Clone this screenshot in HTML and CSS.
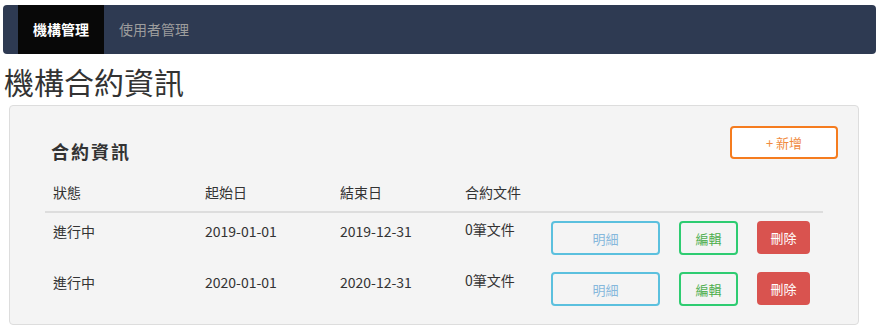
FILE: index.html
```html
<!DOCTYPE html>
<html>
<head>
  <title>機構合約資訊</title>
  <link rel="stylesheet" href="styles.css">
</head>
<body>
  <nav class="navbar">
    <a class="nav-item active" href="#">機構管理</a>
    <a class="nav-item" href="#">使用者管理</a>
  </nav>

  <h1 class="page-title">機構合約資訊</h1>

  <div class="panel">
    <div class="panel-head">
      <h3>合約資訊</h3>
      <button class="btn btn-add">+ 新增</button>
    </div>

    <table class="contract-table">
      <colgroup>
        <col class="col-status">
        <col class="col-start">
        <col class="col-end">
        <col class="col-docs">
        <col>
      </colgroup>
      <thead>
        <tr>
          <th>狀態</th>
          <th>起始日</th>
          <th>結束日</th>
          <th>合約文件</th>
          <th></th>
        </tr>
      </thead>
      <tbody>
        <tr>
          <td>進行中</td>
          <td>2019-01-01</td>
          <td>2019-12-31</td>
          <td class="docs">0筆文件</td>
          <td>
            <div class="actions">
              <button class="btn btn-detail">明細</button>
              <button class="btn btn-edit">編輯</button>
              <button class="btn btn-delete">刪除</button>
            </div>
          </td>
        </tr>
        <tr>
          <td>進行中</td>
          <td>2020-01-01</td>
          <td>2020-12-31</td>
          <td class="docs">0筆文件</td>
          <td>
            <div class="actions">
              <button class="btn btn-detail">明細</button>
              <button class="btn btn-edit">編輯</button>
              <button class="btn btn-delete">刪除</button>
            </div>
          </td>
        </tr>
      </tbody>
    </table>
  </div>
</body>
</html>
```

FILE: styles.css
```css
body {
  margin: 0;
  padding: 5px 3px 0;
  font-family: "Noto Sans CJK TC", "Noto Sans", sans-serif;
  color: #333;
  background: #fff;
}

.navbar {
  display: flex;
  height: 49px;
  padding-left: 15px;
  background-color: #2e3a52;
  border-radius: 4px;
}

.nav-item {
  padding: 0 15px;
  line-height: 49px;
  font-size: 14px;
  color: #9d9d9d;
  text-decoration: none;
}

.nav-item.active {
  background-color: #080808;
  color: #fff;
  font-weight: bold;
}

.page-title {
  margin: 8px 0 5px 1px;
  font-size: 30px;
  font-weight: normal;
  line-height: 38px;
  color: #333;
}

.panel {
  width: 778px;
  margin-left: 6px;
  padding: 20px 35px 9px;
  background-color: #f4f4f4;
  border: 1px solid #ddd;
  border-radius: 4px;
}

.panel-head {
  display: flex;
  justify-content: space-between;
  align-items: flex-start;
  margin-right: -15px;
}

.panel-head h3 {
  margin: 12px 0 0 6px;
  font-size: 18px;
  line-height: 26px;
  letter-spacing: 2px;
  color: #333;
}

.btn {
  height: 34px;
  padding: 0;
  font-family: inherit;
  font-size: 13px;
  border-radius: 4px;
  background: transparent;
  cursor: pointer;
}

.btn-add {
  width: 108px;
  height: 33px;
  border: 2px solid #f57c1f;
  background: #fff;
  color: #f08a3e;
}

.contract-table {
  width: 100%;
  table-layout: fixed;
  border-collapse: collapse;
  font-size: 14px;
}

.col-status { width: 152px; }
.col-start { width: 135px; }
.col-end { width: 125px; }
.col-docs { width: 86px; }

.contract-table th {
  padding: 18px 8px 9px;
  text-align: left;
  font-weight: normal;
  line-height: 20px;
  border-bottom: 2px solid #ddd;
}

.contract-table td {
  padding: 8px 8px 9px;
  vertical-align: top;
  line-height: 20px;
}

.contract-table td.docs {
  line-height: 16px;
}

.actions {
  display: flex;
  gap: 19px;
}

.btn-detail {
  width: 109px;
  border: 2px solid #5bc0de;
  color: #86b8dc;
}

.btn-edit {
  width: 59px;
  border: 2px solid #2ecc71;
  color: #4cae4c;
}

.btn-delete {
  width: 53px;
  height: 33px;
  border: none;
  background-color: #d9534f;
  color: #fff;
}
```
